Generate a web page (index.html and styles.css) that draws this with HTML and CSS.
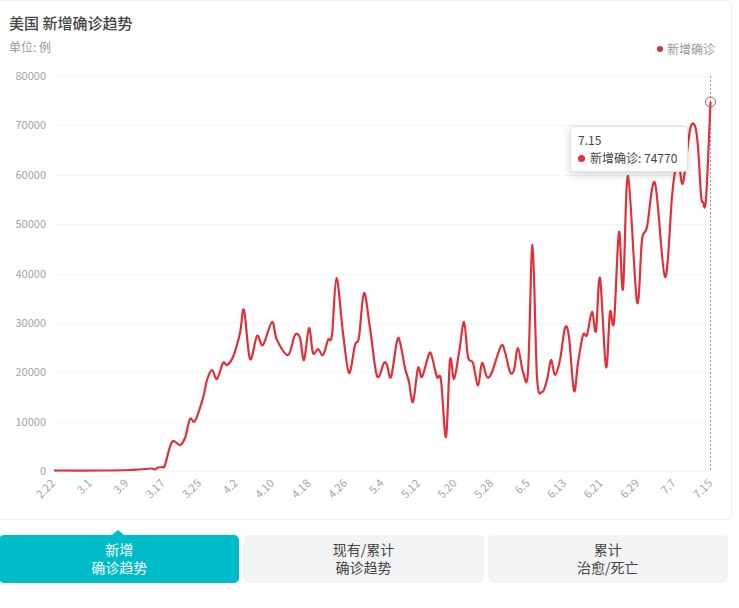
FILE: index.html
```html
<!DOCTYPE html>
<html lang="zh-CN">

<head>
    <meta charset="UTF-8">
    <meta name="viewport" content="width=device-width, initial-scale=1.0">
    <title>美国 新增确诊趋势</title>
    <link rel="stylesheet" href="styles.css">
</head>

<body>
    <div class="card">
        <h2 class="title">美国 新增确诊趋势</h2>
        <div class="subrow">
            <span class="unit">单位: 例</span>
            <span class="legend"><i class="legend-dot"></i>新增确诊</span>
        </div>
        <div class="chart">
            <svg id="chart" class="chart-svg" viewBox="0 60 731 459" width="731" height="459"></svg>
            <div class="tooltip">
                <div class="tooltip-date">7.15</div>
                <div class="tooltip-row"><i class="tooltip-dot"></i>新增确诊: 74770</div>
            </div>
        </div>
    </div>

    <div class="tabs">
        <div class="tab active">新增<br>确诊趋势</div>
        <div class="tab">现有/累计<br>确诊趋势</div>
        <div class="tab">累计<br>治愈/死亡</div>
    </div>

    <script src="chart.js"></script>
</body>

</html>
```

FILE: styles.css
```css
* {
    box-sizing: border-box;
}

body {
    margin: 0;
    background-color: #fff;
    font-family: "Noto Sans CJK SC", "Liberation Sans", sans-serif;
    color: #444;
}

.card {
    width: 732px;
    height: 520px;
    border: 1px solid #eeeff1;
    border-left: none;
    border-radius: 0 6px 6px 0;
    background-color: #fff;
}

.title {
    margin: 0;
    padding: 13px 0 0 9px;
    font-size: 15px;
    line-height: 17px;
    font-weight: 500;
    color: #444;
}

.subrow {
    display: flex;
    justify-content: space-between;
    align-items: center;
    height: 18px;
    margin-top: 6px;
    padding: 0 16px 0 9px;
    font-size: 12px;
    color: #999;
}

.legend {
    display: flex;
    align-items: center;
    margin-top: 5px;
}

.legend-dot {
    width: 6px;
    height: 6px;
    margin-right: 4px;
    border-radius: 50%;
    background-color: #d5303e;
}

.chart {
    position: relative;
    height: 459px;
    margin-top: 5px;
}

.chart-svg {
    display: block;
}

.axis-label {
    font-size: 11px;
    fill: #a3a3a3;
}

.tooltip {
    position: absolute;
    left: 570px;
    top: 66px;
    width: 118px;
    height: 46px;
    padding: 4px 7px;
    border-radius: 4px;
    background-color: #fff;
    border: 1px solid #e2e2e2;
    box-shadow: 0 3px 10px rgba(0, 0, 0, 0.16);
    font-size: 12px;
    line-height: 18px;
    color: #444;
}

.tooltip-row {
    display: flex;
    align-items: center;
    white-space: nowrap;
}

.tooltip-dot {
    width: 7px;
    height: 7px;
    margin-right: 5px;
    border-radius: 50%;
    background-color: #e8303a;
}

.tabs {
    display: flex;
    gap: 4px;
    width: 729px;
    margin: 15px 0 0 -1px;
}

.tab {
    position: relative;
    flex: 1;
    height: 48px;
    border-radius: 5px;
    background-color: #f3f4f6;
    padding-top: 5px;
    text-align: center;
    font-size: 14px;
    line-height: 18px;
    color: #444;
}

.tab.active {
    background-color: #00bcc8;
    color: #fff;
}

.tab.active::before {
    content: "";
    position: absolute;
    left: 113px;
    top: -5px;
    border-left: 6px solid transparent;
    border-right: 6px solid transparent;
    border-bottom: 5px solid #00bcc8;
}
```

FILE: chart.js
```js
const NS = "http://www.w3.org/2000/svg";
const svg = document.getElementById("chart");

const left = 54;
const right = 711;
const zero = 471;
const step = 49.375;

const dates = ["2.22", "3.1", "3.9", "3.17", "3.25", "4.2", "4.10", "4.18", "4.26", "5.4",
    "5.12", "5.20", "5.28", "6.5", "6.13", "6.21", "6.29", "7.7", "7.15"];

// x, y of the curve in page pixels
const points = [
    [54, 470.5], [100, 470.5], [130, 470], [138, 469.5], [146, 469], [152, 468.5], [155, 469.5],
    [158, 467.5], [163, 467], [165, 465], [172, 442], [180, 445], [185, 438], [190, 419], [195, 421],
    [203, 398], [207, 380], [212, 370], [217, 379], [223, 363], [227, 365], [233, 357], [240, 333],
    [244, 310], [250, 359], [257, 336], [263, 345], [272, 322], [277, 340], [288, 355], [295, 335],
    [300, 338], [304, 360], [309, 328], [313, 353], [318, 349], [323, 355], [328, 340], [332, 335],
    [336.5, 278], [343, 333], [349, 373], [355, 345], [359, 337], [364, 293], [370, 328], [377, 376],
    [384, 363], [387, 365], [391, 377], [397, 341], [400, 342], [405, 368], [409, 382], [413, 402],
    [418, 368], [422, 377], [429, 354], [432, 357], [437, 377], [441, 380], [446, 437], [450, 360],
    [454, 379], [459, 353], [464, 322], [468, 357], [473, 363], [478, 386], [482, 363], [487, 377],
    [492, 372], [501, 346], [505, 352], [510, 372], [514, 370], [518, 348], [523, 372], [528, 372],
    [532.5, 245], [537, 377], [542, 392], [547, 380], [551, 360], [555, 375], [560, 360], [565, 328],
    [569, 337], [574, 391], [578, 363], [583, 335], [587, 335], [592, 312], [596, 331], [600, 278],
    [606, 367], [610, 312], [614, 322], [619, 232], [623, 289], [628, 176], [637, 302], [642, 240],
    [647, 227], [655, 183], [665, 277], [672, 197], [675, 172], [679, 165], [683, 183], [690, 130],
    [695, 126], [698, 147], [701, 195], [703, 202], [706, 199], [710.5, 102]
];

function add(tag, attrs, text) {
    const el = document.createElementNS(NS, tag);
    for (const key in attrs) {
        el.setAttribute(key, attrs[key]);
    }
    if (text) {
        el.textContent = text;
    }
    svg.appendChild(el);
    return el;
}

function smooth(pts) {
    let d = `M${pts[0][0]} ${pts[0][1]}`;
    for (let i = 0; i < pts.length - 1; i++) {
        const p0 = pts[i - 1] || pts[i];
        const p1 = pts[i];
        const p2 = pts[i + 1];
        const p3 = pts[i + 2] || p2;
        const c1x = p1[0] + (p2[0] - p0[0]) / 6;
        const c1y = p1[1] + (p2[1] - p0[1]) / 6;
        const c2x = p2[0] - (p3[0] - p1[0]) / 6;
        const c2y = p2[1] - (p3[1] - p1[1]) / 6;
        d += ` C${c1x.toFixed(1)} ${c1y.toFixed(1)} ${c2x.toFixed(1)} ${c2y.toFixed(1)} ${p2[0]} ${p2[1]}`;
    }
    return d;
}

for (let i = 0; i <= 8; i++) {
    const y = Math.round(zero - i * step) + 0.5;
    add("line", { x1: left, x2: right, y1: y, y2: y, stroke: "#f5f6f7" });
    add("text", { x: 46, y: y + 3.5, "text-anchor": "end", class: "axis-label" }, String(i * 10000));
}

dates.forEach((date, i) => {
    const x = left + i * (right - left) / 18;
    add("text", {
        x: x + 2,
        y: 484,
        "text-anchor": "end",
        class: "axis-label",
        transform: `rotate(-45 ${x + 2} 484)`
    }, date);
});

add("line", { x1: 710.5, x2: 710.5, y1: 76, y2: 471, stroke: "#999", "stroke-dasharray": "2 2" });
add("path", { d: smooth(points), fill: "none", stroke: "#e2303a", "stroke-width": 2.2 });
add("circle", { cx: 710.5, cy: 102, r: 5, fill: "none", stroke: "#dc4a5a", "stroke-width": 1 });
```
